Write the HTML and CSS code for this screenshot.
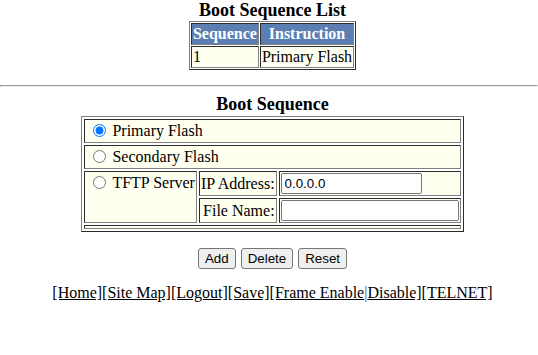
FILE: index.html
```html
<html>
  <head>
    <meta charset="utf-8">
    <link rel="stylesheet" href="styles.css">
  </head>
  <body>
    <div class="page">
      <p class="caption first">Boot Sequence List</p>
      <table class="grid listTable">
        <tr>
          <th>Sequence</th>
          <th>Instruction</th>
        </tr>
        <tr>
          <td>1</td>
          <td>Primary Flash</td>
        </tr>
      </table>
    </div>
    <hr class="rule">
    <div class="page">
      <form class="bootForm">
        <p class="caption">Boot Sequence</p>
        <table class="grid bootTable">
          <tr>
            <td colspan="3"><label><input type="radio" name="boot" checked>Primary Flash</label></td>
          </tr>
          <tr>
            <td colspan="3"><label><input type="radio" name="boot">Secondary Flash</label></td>
          </tr>
          <tr>
            <td rowspan="2" class="top"><label><input type="radio" name="boot">TFTP Server</label></td>
            <td class="right">IP Address:</td>
            <td><input type="text" class="ipField" value="0.0.0.0"></td>
          </tr>
          <tr>
            <td class="right">File Name:</td>
            <td><input type="text" class="fileField"></td>
          </tr>
          <tr class="spacer">
            <td colspan="3"></td>
          </tr>
        </table>
        <div class="buttons">
          <input type="button" value="Add">
          <input type="button" value="Delete">
          <input type="reset" value="Reset">
        </div>
      </form>
      <p class="links"><a href="#">[Home]</a><a href="#">[Site Map]</a><a href="#">[Logout]</a><a href="#">[Save]</a><a href="#">[Frame Enable</a><span class="sep">|</span><a href="#">Disable]</a><a href="#">[TELNET]</a></p>
    </div>
  </body>
</html>
```

FILE: styles.css
```css
body {
  margin: 0;
  font-family: "Liberation Serif", "Times New Roman", serif;
  font-size: 16px;
  color: #000;
  background-color: #fff;
}
.page {
  padding: 0 1px 0 8px;
  text-align: center;
}
.caption {
  margin: 0;
  font-size: 18px;
  font-weight: bold;
  line-height: 20px;
}
.caption.first {
  line-height: 21px;
}
.grid {
  margin: 2px auto 0;
  border: 1px outset #808080;
  border-spacing: 2px;
  text-align: left;
}
.grid th,
.grid td {
  border: 1px inset #808080;
  padding: 1px;
}
.listTable {
  margin-top: 0;
  border-spacing: 1px;
  line-height: 18px;
}
.listTable th {
  background-color: #5b7fb3;
  color: #fff;
  font-weight: bold;
  text-align: center;
}
.listTable td {
  background-color: #fffff0;
}
.bootTable {
  width: 380px;
}
.bootTable td {
  background-color: #fffff0;
  white-space: nowrap;
  line-height: 20px;
}
.bootTable .top {
  vertical-align: top;
}
.bootTable .right {
  text-align: right;
}
.bootTable input[type=radio] {
  margin: 0 6px 0 7px;
  vertical-align: -1px;
}
.bootTable input[type=text] {
  vertical-align: middle;
}
.bootTable .spacer td {
  height: 1px;
  padding: 1px;
  line-height: 1px;
  font-size: 1px;
}
.ipField {
  width: 141px;
}
.fileField {
  width: 178px;
  box-sizing: border-box;
}
.rule {
  margin: 15px 0 7px;
}
.bootForm {
  margin: 0;
}
.buttons {
  display: flex;
  justify-content: center;
  gap: 5px;
  margin-top: 16px;
}
.buttons input {
  margin: 0;
  padding: 1px 6px;
  border: 1px solid #767676;
  border-radius: 3px;
  background-color: #efefef;
  font-family: "Liberation Sans", Arial, sans-serif;
  font-size: 13.33px;
  line-height: 17px;
}
.links {
  margin: 15px 0 0;
}
.links a {
  color: #000;
}
.sep {
  color: #555;
}
```
